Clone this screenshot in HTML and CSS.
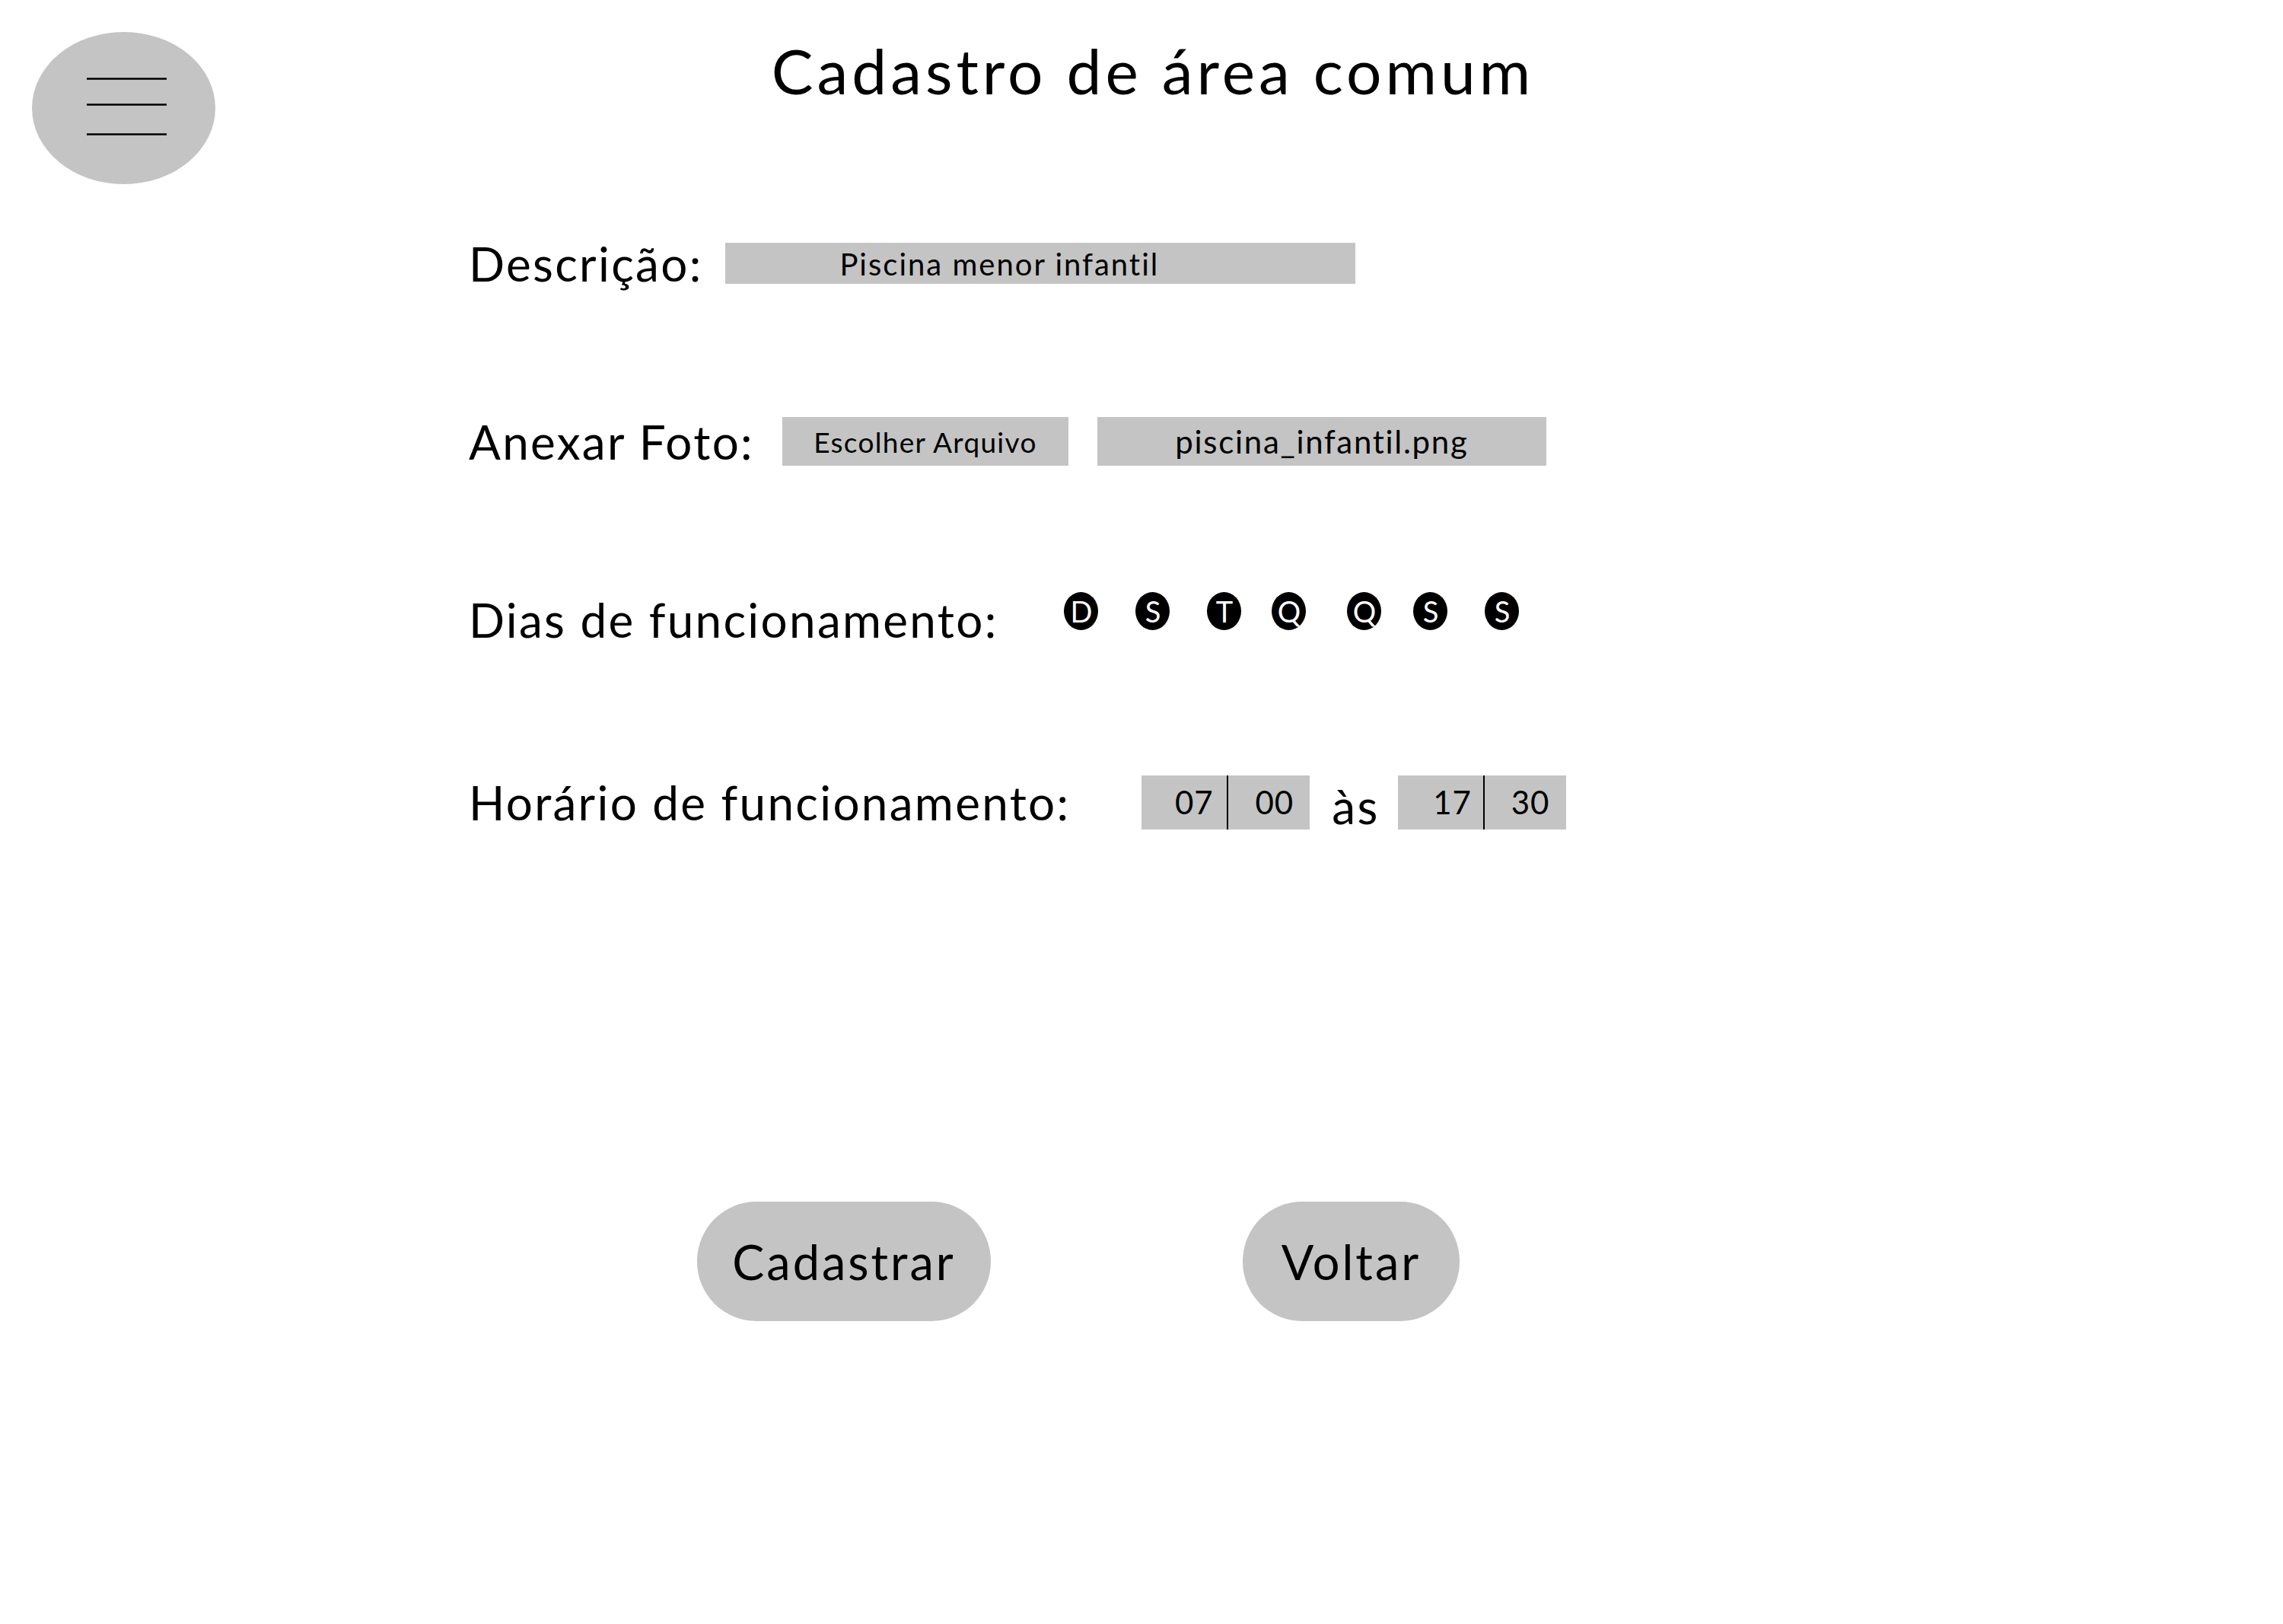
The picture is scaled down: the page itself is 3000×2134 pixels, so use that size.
FILE: index.html
```html
<!DOCTYPE html>
<html lang="pt-BR">
<head>
<meta charset="utf-8">
<title>Cadastro de área comum</title>
<link rel="stylesheet" href="styles.css">
</head>
<body>
<div class="page">
  <header class="header">
    <button class="menu" aria-label="Menu">
      <svg width="241" height="200" viewBox="0 0 241 200">
        <ellipse cx="120.5" cy="100" rx="120.5" ry="100" fill="#c4c4c4"/>
        <line x1="72" y1="61.5" x2="177" y2="61.5" stroke="#000" stroke-width="2.5"/>
        <line x1="72" y1="95.5" x2="177" y2="95.5" stroke="#000" stroke-width="2.5"/>
        <line x1="72" y1="134.5" x2="177" y2="134.5" stroke="#000" stroke-width="2.5"/>
      </svg>
    </button>
    <h1 class="title">Cadastro de área comum</h1>
  </header>

  <main class="form">
    <div class="row row-desc">
      <span class="label">Descrição:</span>
      <div class="field field-desc">Piscina menor infantil</div>
    </div>

    <div class="row row-foto">
      <span class="label">Anexar Foto:</span>
      <div class="field field-choose">Escolher Arquivo</div>
      <div class="field field-file">piscina_infantil.png</div>
    </div>

    <div class="row row-dias">
      <span class="label">Dias de funcionamento:</span>
      <div class="days">
        <span class="day">D</span>
        <span class="day">S</span>
        <span class="day day-t">T</span>
        <span class="day day-q1">Q</span>
        <span class="day day-q2">Q</span>
        <span class="day">S</span>
        <span class="day">S</span>
      </div>
    </div>

    <div class="row row-hora">
      <span class="label">Horário de funcionamento:</span>
      <div class="time">
        <span class="time-cell">07</span>
        <span class="time-cell time-min">00</span>
      </div>
      <span class="as">às</span>
      <div class="time">
        <span class="time-cell time-hour2">17</span>
        <span class="time-cell time-min">30</span>
      </div>
    </div>
  </main>

  <div class="actions">
    <button class="btn btn-cadastrar">Cadastrar</button>
    <button class="btn btn-voltar">Voltar</button>
  </div>
</div>
</body>
</html>
```

FILE: styles.css
```css
* {
  box-sizing: border-box;
}

html, body {
  margin: 0;
  padding: 0;
  background: #ffffff;
}

body {
  font-family: Lato, "Noto Sans", sans-serif;
  font-variant-ligatures: none;
  color: #000;
}

.page {
  width: 3000px;
  height: 2134px;
  position: relative;
}

.header {
  display: grid;
  grid-template-columns: 283px 1fr 283px;
  align-items: start;
  padding-top: 42px;
}

.menu {
  margin: 0 0 0 42px;
  padding: 0;
  border: 0;
  background: none;
  width: 241px;
  height: 200px;
  display: block;
}

.menu svg {
  display: block;
}

.title {
  margin: 0;
  padding-left: 30px;
  text-align: center;
  font-weight: 400;
  font-size: 82px;
  letter-spacing: 5px;
  line-height: 1;
  margin-top: 9px;
}

.form {
  display: flex;
  flex-direction: column;
  gap: 134px;
  padding-left: 616px;
  margin-top: 54px;
}

.row {
  display: flex;
  align-items: center;
  height: 100px;
}

.row-hora {
  margin-top: 6px;
}

.label {
  font-size: 62px;
  letter-spacing: 2.3px;
  line-height: 1;
  white-space: nowrap;
}

.field {
  background: #c4c4c4;
  display: flex;
  align-items: center;
  white-space: nowrap;
}

.field-desc {
  margin-left: 30px;
  width: 828px;
  height: 54px;
  padding-left: 150px;
  font-size: 40px;
  letter-spacing: 2px;
  padding-top: 2px;
}

.field-choose {
  margin-left: 37px;
  width: 376px;
  height: 64px;
  justify-content: center;
  font-size: 37px;
  letter-spacing: 1.3px;
}

.field-file {
  margin-left: 38px;
  width: 590px;
  height: 64px;
  justify-content: center;
  font-size: 42px;
  letter-spacing: 1.7px;
}

.days {
  display: flex;
  align-items: center;
  margin-left: 87px;
  margin-bottom: 22px;
}

.day {
  width: 45px;
  height: 50px;
  border-radius: 50%;
  background: #000;
  color: #fff;
  font-size: 38px;
  line-height: 50px;
  text-align: center;
  margin-right: 49px;
}

.day-t {
  margin-right: 40px;
}

.day-q1 {
  margin-right: 54px;
}

.day-q2 {
  margin-right: 42px;
}

.day:last-child {
  margin-right: 0;
}

.time {
  display: flex;
  height: 71px;
  background: #c4c4c4;
  margin-left: 94px;
}

.row-hora .time + .as + .time {
  margin-left: 24px;
}

.time-cell {
  width: 112px;
  display: flex;
  align-items: center;
  justify-content: center;
  padding-left: 26px;
  font-size: 42px;
  letter-spacing: 1px;
}

.time-min {
  width: 109px;
  border-left: 2px solid #000;
  padding-left: 14px;
}

.time-hour2 {
  padding-left: 32px;
}

.as {
  font-size: 62px;
  letter-spacing: 2.3px;
  line-height: 1;
  margin-left: 29px;
  padding-top: 10px;
}

.actions {
  display: flex;
  align-items: center;
  padding-left: 916px;
  margin-top: 475px;
  gap: 331px;
}

.btn {
  border: 0;
  background: #c4c4c4;
  height: 157px;
  border-radius: 78px / 78px;
  font-family: Lato, "Noto Sans", sans-serif;
  font-variant-ligatures: none;
  font-size: 63px;
  letter-spacing: 3px;
  color: #000;
  padding: 0;
  display: flex;
  align-items: center;
  justify-content: center;
}

.btn-cadastrar {
  width: 386px;
}

.btn-voltar {
  width: 285px;
}
```
